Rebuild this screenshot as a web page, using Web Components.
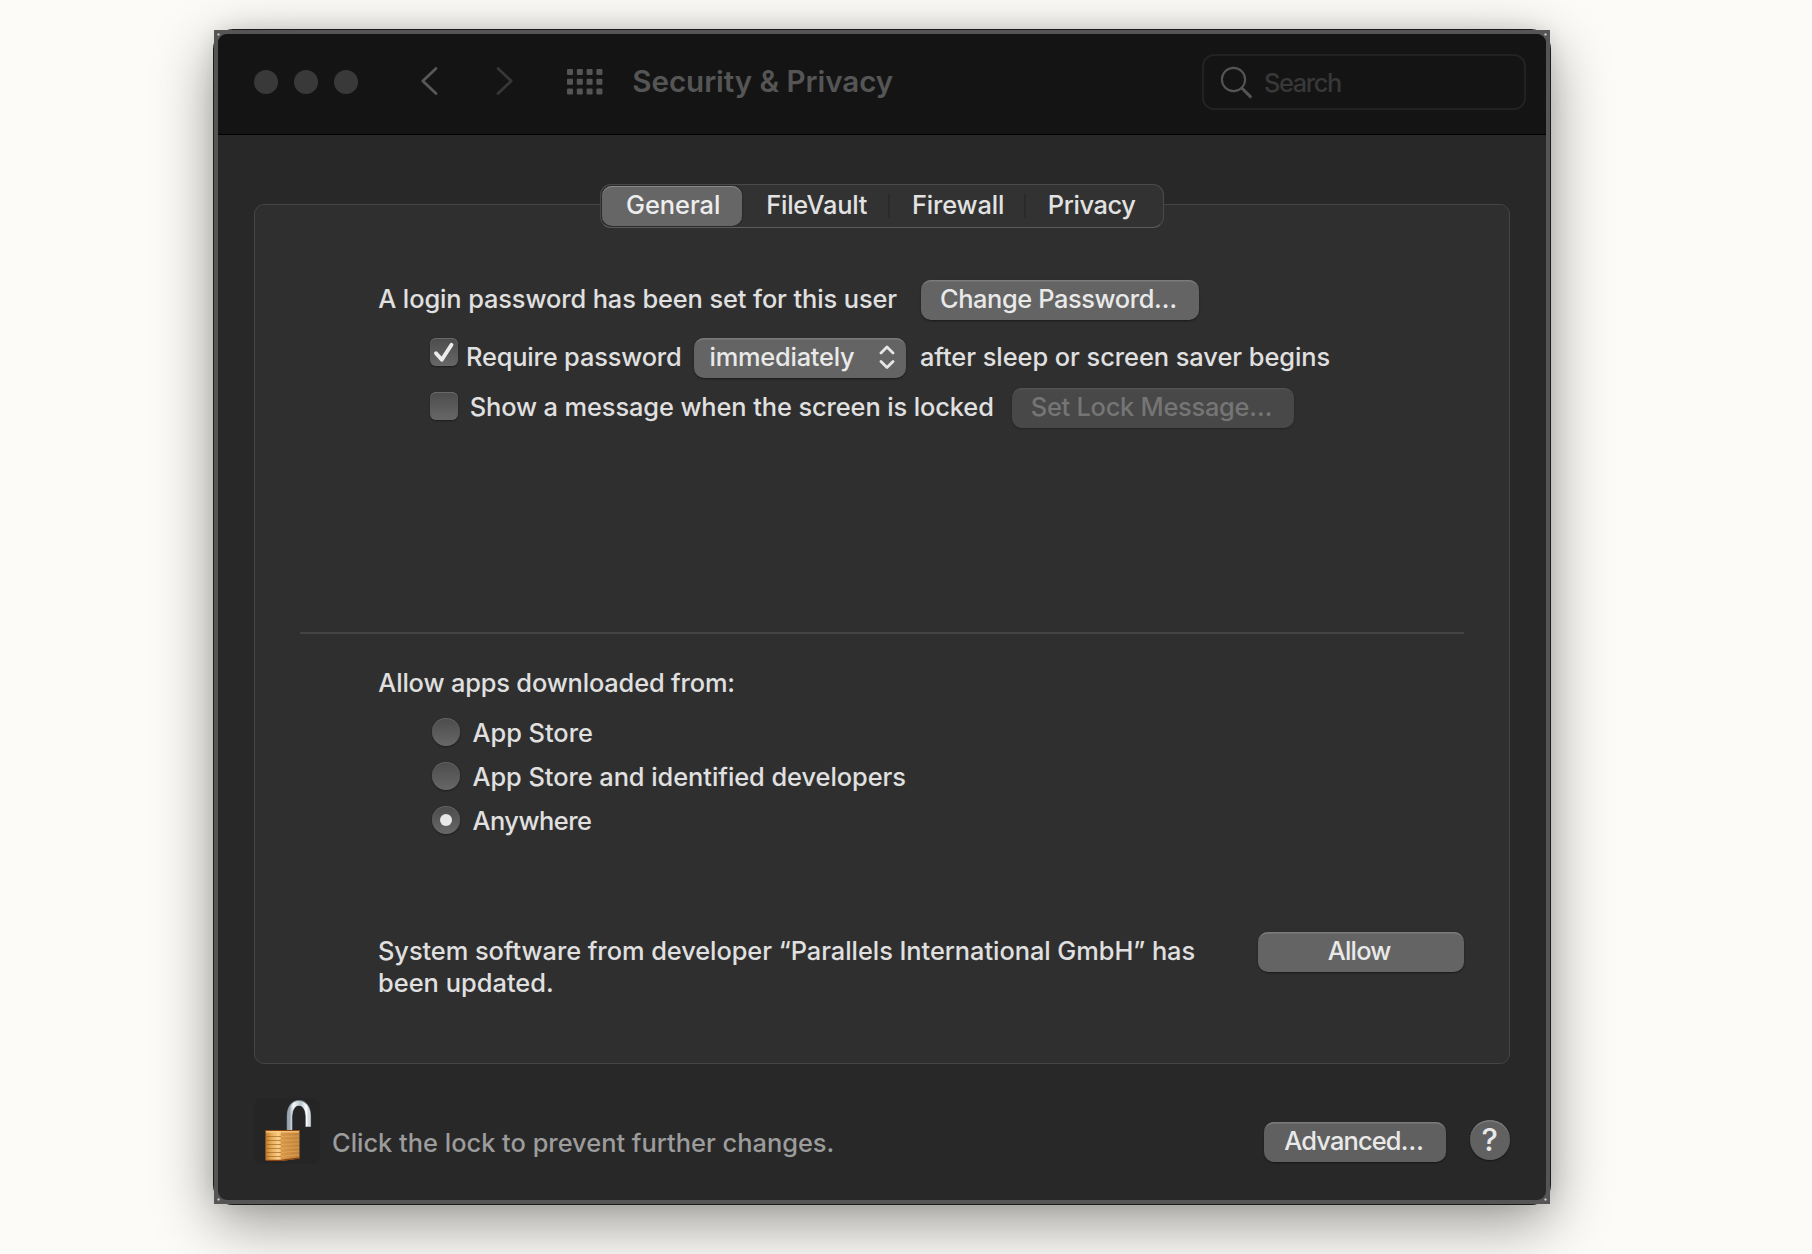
<!DOCTYPE html>
<html lang="en">
<head>
<meta charset="utf-8">
<title>Security &amp; Privacy</title>
<style>
html,body{margin:0;height:100%;overflow:hidden}
body{background:#fcfbf7;font-family:Inter,"Noto Sans","Liberation Sans",sans-serif;font-size:25.4px;font-weight:450;color:#e0e0e0}
</style>
</head>
<body>
<privacy-app></privacy-app>
<script>
const define = (name, html, setup) => {
  const tpl = document.createElement('template');
  tpl.innerHTML = html;
  customElements.define(name, class extends HTMLElement {
    connectedCallback() {
      if (this.shadowRoot) return;
      this.attachShadow({ mode: 'open' }).append(tpl.content.cloneNode(true));
      if (setup) setup(this, this.shadowRoot);
    }
  });
};

/* Single-line label whose tracking is adjusted so that its ink fills the width "w". */
const ctx = document.createElement('canvas').getContext('2d');
define('fit-label', `<style>
:host{display:block;flex:none;white-space:nowrap;line-height:30px;height:30px}
span{display:block;width:max-content}
</style><span><slot></slot></span>`, (host, root) => {
  const text = host.textContent, w = +host.getAttribute('w');
  const cs = getComputedStyle(host);
  ctx.font = `${cs.fontWeight} ${cs.fontSize} ${cs.fontFamily}`;
  const m = ctx.measureText(text);
  const ink = m.actualBoundingBoxLeft + m.actualBoundingBoxRight;
  const span = root.querySelector('span');
  host.style.width = w + 'px';
  span.style.letterSpacing = (text.length > 1 ? (w - ink) / (text.length - 1) : 0).toFixed(3) + 'px';
  span.style.marginLeft = m.actualBoundingBoxLeft.toFixed(2) + 'px';
});

define('push-button', `<style>
:host{display:flex;flex:none;box-sizing:border-box;align-items:center;justify-content:center;height:40px;padding:0 3px 2px 0;border-radius:10px;background:#646464;color:#e9e9e9;box-shadow:inset 0 2px 0 -.5px #7b7b7b,0 1px 2px rgba(0,0,0,.45)}
:host([disabled]){background:#484848;color:#757575;box-shadow:inset 0 2px 0 -.5px #525252,0 1px 2px rgba(0,0,0,.25)}
:host([round]){width:40px;border-radius:50%;background:#616161;padding:0}
:host([popup]){justify-content:flex-start;padding-left:16.5px;gap:23.5px}
</style><slot></slot>`);

define('check-box', `<style>
:host{display:block;flex:none;width:28px;height:28px;border-radius:6px;background:linear-gradient(#4c4c4c,#676767);box-shadow:inset 0 1px 0 #686868,0 1px 2px rgba(0,0,0,.4)}
svg{display:none}
:host([checked]) svg{display:block}
</style><svg width="28" height="28" viewBox="0 0 28 28"><path d="M6 15.3 11.8 21.8 21.5 6.8" fill="none" stroke="#ececec" stroke-width="3.9" stroke-linecap="round" stroke-linejoin="round"/></svg>`);

define('radio-option', `<style>
:host{display:flex;height:28px;gap:12.5px}
i{width:28px;height:28px;border-radius:50%;display:grid;place-items:center;background:linear-gradient(#4c4c4c,#676767);box-shadow:inset 0 1px 0 #626262,0 1px 2px rgba(0,0,0,.4)}
:host([checked]) i::after{content:"";width:12px;height:12px;border-radius:50%;background:#e8e8e8}
</style><i></i><slot></slot>`);

define('tab-bar', `<style>
:host{display:flex;box-sizing:border-box;width:564px;height:44px;border:1px solid #4a4a4a;border-bottom-color:#5d5d5d;border-radius:11px;background:#323232;padding:1px;position:relative}
</style><slot></slot>`);
define('tab-item', `<style>
:host{display:flex;box-sizing:border-box;align-items:center;justify-content:center;height:40px;padding:0 0 2px 2px;color:#e2e2e2}
:host([selected]){background:#666;border-radius:10px;color:#ededed;box-shadow:inset 0 1px 0 #898989,0 0 2px rgba(0,0,0,.5)}
</style><slot></slot>`);
define('tab-rule', `<style>:host{display:block;width:2px;height:24px;margin-top:8px;background:#2a2a2a}</style>`);

define('search-field', `<style>
:host{display:flex;flex:none;box-sizing:border-box;width:324px;height:56px;border:2px solid #222;border-radius:12px;padding-left:16px;gap:11px;color:#383838}
svg{margin-top:10px;flex:none}
fit-label{margin-top:12px}
</style><svg width="34" height="34" viewBox="0 0 34 34" fill="none" stroke="#545454" stroke-linecap="round"><circle cx="13.5" cy="13.5" r="11.6" stroke-width="2.1"/><path d="M22 22.2 30.4 30.6" stroke-width="3"/></svg><fit-label w="76">Search</fit-label>`);

define('title-bar', `<style>
:host{display:flex;box-sizing:border-box;height:101px;background:#141414;border-bottom:1px solid #000;padding:20px 20px 0 36px}
.lights{display:flex;gap:16px;margin-top:16px}
.lights i{width:24px;height:24px;border-radius:50%;background:#393939}
.nav{margin:12px 0 0 62px}
.grid{margin:15px 0 0 53px}
fit-label{margin:11.5px auto 0 30.3px;font-size:29.6px;font-weight:600;color:#555}
</style>
<div class="lights"><i></i><i></i><i></i></div>
<svg class="nav" width="94" height="30" viewBox="0 0 94 30" fill="none" stroke-width="2.8" stroke-linecap="round" stroke-linejoin="round"><path d="M16 2.5 2.8 15 16 27.5" stroke="#585858"/><path d="M78 2.5 91.2 15 78 27.5" stroke="#373737"/></svg>
<svg class="grid" width="36" height="26" viewBox="0 0 36 26" fill="#555"></svg>
<fit-label w="259.5">Security &amp; Privacy</fit-label>
<search-field></search-field>`, (h, root) => {
  let s = '';
  for (const y of [0, 9.8, 19.4]) for (const x of [0, 9.8, 19.6, 29.4]) s += `<rect x="${x}" y="${y}" width="6" height="6" rx="1"/>`;
  root.querySelector('.grid').innerHTML = s;
});

define('settings-panel', `<style>
:host{display:block;box-sizing:border-box;height:860px;margin-top:-24px;border:1px solid #454545;border-radius:10px;background:#2f2f2f;padding:75px 45px 0}
.row{display:flex;align-items:center;height:40px;margin-left:78.3px}
.row>fit-label{padding-bottom:2px}
.indent{margin-left:130px}
check-box{align-self:flex-start}
hr{border:0;height:2px;background:#444;margin:204px 0 34px}
.heading{margin:0 0 20px 78.3px}
.radios{display:grid;gap:16px;margin-left:132px}
.notice{display:flex;justify-content:space-between;margin:98px 0 0 79px}
.notice fit-label{height:32px;line-height:32px}
.copy{margin-top:2.5px}
.notice push-button fit-label{height:30px;line-height:30px}
</style>
<div class="row"><fit-label w="519">A login password has been set for this user</fit-label><push-button style="width:278px;margin-left:23.7px"><fit-label w="235">Change Password…</fit-label></push-button></div>
<div class="row indent" style="margin-top:18px"><check-box checked></check-box><fit-label w="212" style="margin-left:10px">Require password</fit-label><push-button popup style="width:212px;margin-left:14px"><fit-label w="144.5">immediately</fit-label><svg width="16" height="24" viewBox="0 0 16 24" fill="none" stroke="#e6e6e6" stroke-width="2.8" stroke-linecap="round" stroke-linejoin="round"><path d="M2 8 8 2 14 8M2 16.5 8 22.5 14 16.5"/></svg></push-button><fit-label w="408.5" style="margin-left:15px">after sleep or screen saver begins</fit-label></div>
<div class="row indent" style="margin-top:10px"><check-box style="margin-top:4px"></check-box><fit-label w="521.5" style="margin-left:12.7px">Show a message when the screen is locked</fit-label><push-button disabled style="width:282px;margin-left:19.8px"><fit-label w="239.5">Set Lock Message…</fit-label></push-button></div>
<hr>
<fit-label class="heading" w="355">Allow apps downloaded from:</fit-label>
<div class="radios">
<radio-option><fit-label w="119.5">App Store</fit-label></radio-option>
<radio-option><fit-label w="432.8">App Store and identified developers</fit-label></radio-option>
<radio-option checked><fit-label w="118.5">Anywhere</fit-label></radio-option>
</div>
<div class="notice"><div class="copy"><fit-label w="815.5">System software from developer “Parallels International GmbH” has</fit-label><fit-label w="173">been updated.</fit-label></div><push-button style="width:206px"><fit-label w="63.5">Allow</fit-label></push-button></div>`);

define('pad-lock', `<style>
:host{display:block;flex:none;width:66px;height:66px;border-radius:8px;background:#252525}
svg{display:block}
</style><svg width="66" height="66" viewBox="0 0 66 66">
<defs>
<linearGradient id="s" x1="0" x2="1"><stop offset="0" stop-color="#9aa8af"/><stop offset=".2" stop-color="#f8fbfc"/><stop offset=".6" stop-color="#b9c5cb"/><stop offset=".9" stop-color="#fff"/><stop offset="1" stop-color="#d5dde1"/></linearGradient>
<linearGradient id="l" x1="0" x2="1"><stop offset="0" stop-color="#c07a2c"/><stop offset=".35" stop-color="#e5a854"/><stop offset=".85" stop-color="#fbd08a"/><stop offset="1" stop-color="#eeb061"/></linearGradient>
<linearGradient id="r" x1="0" x2="1"><stop offset="0" stop-color="#d79a4b"/><stop offset="1" stop-color="#c0813a"/></linearGradient>
</defs>
<path d="M35.6 32V18C35.6 .5 54.2 .5 54.2 18V29" fill="none" stroke="#74838b" stroke-width="5.8"/>
<path d="M35.6 32V18C35.6 1 54.2 1 54.2 18V28.6" fill="none" stroke="url(#s)" stroke-width="4.7"/>
<path d="M11.5 32H27V63H12.5L11.5 62Z" fill="url(#l)"/><path d="M27 32H45.5V60.5L27 63Z" fill="url(#r)"/>
<g stroke="#a0601f" stroke-width="1.1" opacity=".65"><path d="M11.5 38.5H27M11.5 42.5H27M11.5 46.5H27M11.5 50.5H27M11.5 54.5H27M11.5 58.5H27"/></g>
<g stroke="#ecb669" stroke-width="1" opacity=".5"><path d="M27 38.5 45 38M27 42.5 45 42M27 46.5 45 45.8M27 50.5 45 49.5M27 54.5 45 53M27 58.5 45 56.8"/></g>
<path d="M11.5 32.5H45.5" stroke="#8d4810"/><path d="M12 33.8H45" stroke="#fccd86" stroke-width="1.3"/><path d="M12 62.4H27L45.5 60" fill="none" stroke="#8a4312" stroke-width="1.3"/>
</svg>`);

define('window-footer', `<style>
:host{display:flex;align-items:flex-start;padding-top:34px}
.hint{color:#9c9c9c;margin:29.5px 0 0 13px}
</style>
<pad-lock></pad-lock><fit-label class="hint" w="499.5">Click the lock to prevent further changes.</fit-label>
<push-button style="width:182px;margin:24px 24px 0 auto;background:#606060"><fit-label w="138.5">Advanced…</fit-label></push-button>
<push-button round style="margin-top:22px"><fit-label w="15" style="font-size:31px;font-weight:450">?</fit-label></push-button>`);

define('privacy-app', `<style>
:host{display:block;box-sizing:border-box;height:1254px;padding:30px 0 0 214px;position:relative;z-index:0}
.frame{box-sizing:border-box;width:1336px;height:1174px;padding:4px;background:radial-gradient(circle at 4.5px 4.5px,#ccc 0 .6px,transparent 1.6px),radial-gradient(circle at 1331.5px 4.5px,#ccc 0 .6px,transparent 1.6px),radial-gradient(circle at 4.5px 1169.5px,#ccc 0 .6px,transparent 1.6px),radial-gradient(circle at 1331.5px 1169.5px,#ccc 0 .6px,transparent 1.6px),#555;position:relative}
.frame::before{content:"";position:absolute;z-index:-1;inset:-1px;border-radius:20px;background:#1c1c1c;box-shadow:0 18px 60px rgba(0,0,0,.4),0 0 20px rgba(0,0,0,.1)}
.window{height:1166px;border-radius:9px;overflow:hidden;background:#282828}
main{display:flex;flex-direction:column;padding:49px 36px 0}
tab-bar{align-self:center;z-index:1}
</style>
<div class="frame"><div class="window">
<title-bar></title-bar>
<main>
<tab-bar>
<tab-item selected style="width:140px"><fit-label w="92">General</fit-label></tab-item>
<tab-item style="width:146px;padding-left:6px"><fit-label w="99.5">FileVault</fit-label></tab-item><tab-rule></tab-rule>
<tab-item style="width:134px;padding-left:3px"><fit-label w="89">Firewall</fit-label></tab-item><tab-rule></tab-rule>
<tab-item style="width:132px"><fit-label w="86.5">Privacy</fit-label></tab-item>
</tab-bar>
<settings-panel></settings-panel>
<window-footer></window-footer>
</main></div></div>`);
</script>
</body>
</html>
